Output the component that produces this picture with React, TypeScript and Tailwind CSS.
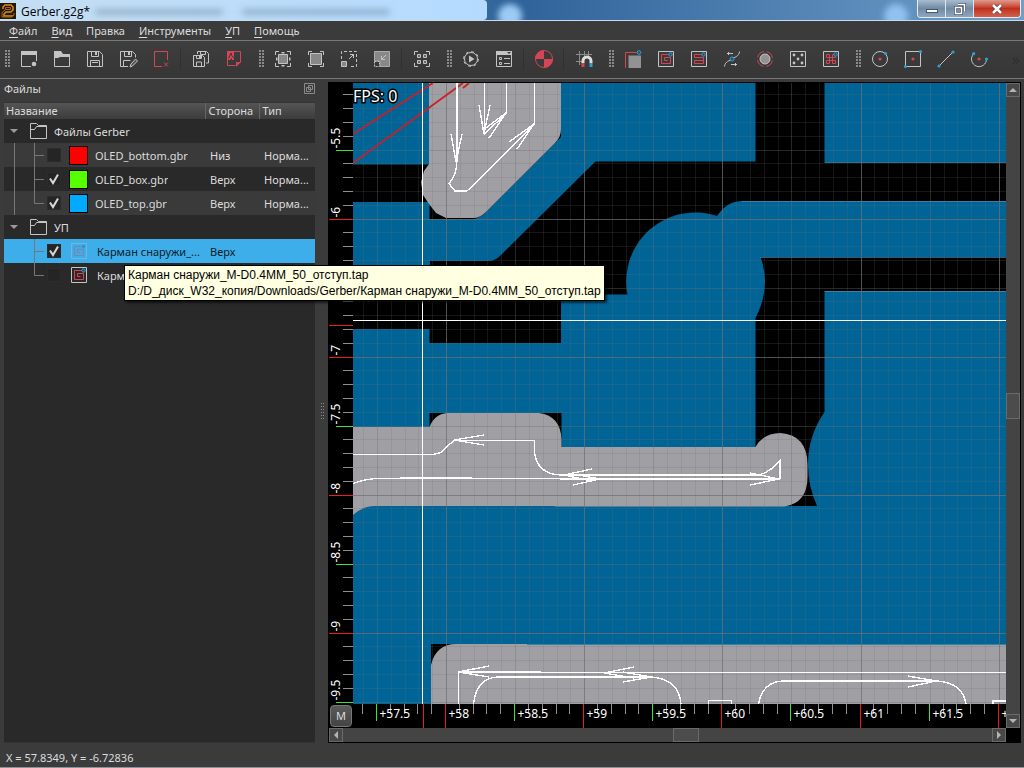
import React, { useState } from 'react';

type Layer = {
  id: string;
  name: string;
  side: string;
  type: string;
  checked: boolean;
  color?: string;
  selected?: boolean;
};

const gerberFiles: Layer[] = [
  { id: 'bottom', name: 'OLED_bottom.gbr', side: 'Низ', type: 'Норма...', checked: false, color: '#ff0000' },
  { id: 'box', name: 'OLED_box.gbr', side: 'Верх', type: 'Норма...', checked: true, color: '#55ff00' },
  { id: 'top', name: 'OLED_top.gbr', side: 'Верх', type: 'Норма...', checked: true, color: '#00aaff' },
];

const toolpaths: Layer[] = [
  { id: 'pocket1', name: 'Карман снаружи_...', side: 'Верх', type: '', checked: true, selected: true },
  { id: 'pocket2', name: 'Карм', side: '', type: '', checked: false },
];

const menus = ['Файл', 'Вид', 'Правка', 'Инструменты', 'УП', 'Помощь'];

const LIGHT = '#c4c4c4';
const RED = '#d64553';
const BLUE = '#2f9fd8';

const PocketIcon = () => (
  <>
    <path d="M.5.5h15v15H.5z" stroke={LIGHT} />
    <path d="M12.5 3.5h-9v9h9v-6h-6v3h3" stroke={RED} />
    <circle cx="12.5" cy="3.5" r="1.7" stroke={BLUE} fill="#24506b" />
  </>
);

const icons: Record<string, React.ReactNode> = {
  'Новый': (
    <>
      <path d="M0 0h16v4H0z" fill={LIGHT} />
      <path d="M.5 3v12.5H10M15.5 3v7" stroke={LIGHT} />
      <circle cx="13" cy="13" r="2.3" fill={LIGHT} />
    </>
  ),
  'Открыть': (
    <>
      <path d="M.5 1v14.5h15V4" stroke={LIGHT} />
      <path d="M0 0h7l2 3h7v3H6L4 7H0z" fill={LIGHT} />
    </>
  ),
  'Сохранить': (
    <>
      <path d="M.5.5h12l3 3v12H.5zM4.5.5v5h7v-5M3.5 15V9.5h9V15M5 11.5h6" stroke={LIGHT} />
      <path d="M8 1h2v3H8z" fill={LIGHT} />
    </>
  ),
  'Сохранить как': (
    <>
      <path d="M8 15.5H.5V.5h12l3 3v3M4.5.5v5h7v-5M3.5 15V9.5h7" stroke={LIGHT} />
      <path d="M10 16l1-3 4.5-5 2 2-5 5z" stroke={LIGHT} fill="#555" />
      <path d="M8 1h2v3H8z" fill={LIGHT} />
    </>
  ),
  'Закрыть': <path d="M14.5 9V.5h-13v15H9M11 11.5l4 4M15 11.5l-4 4" stroke={RED} />,
  'Сохранить все': (
    <>
      <path d="M4.5 3V.5h9l2 2V12H13M7.5.5v3h5v-3" stroke={LIGHT} />
      <path d="M.5 4.5h9l2 2v9H.5zM3.5 4.5v3h5v-3M3.5 15v-4h5v4" stroke={LIGHT} />
      <path d="M6 5h2v2H6z" fill={LIGHT} />
    </>
  ),
  'PDF': (
    <>
      <path d="M1.5 8.5v6h8M8 .5h6.500v11" stroke={RED} />
      <path d="M1 0h7v9H6V7L4 9H1z" fill={RED} />
      <path d="M2.5 7.5L5 2l1 3 2 2" stroke="#3a3a3a" />
      <path d="M10 16v-5h5z" fill={RED} />
    </>
  ),
  'Показать все': (
    <>
      <path d="M3.5 3.5h9v9h-9z" fill="#888" stroke={LIGHT} />
      <path d="M.5 4V.5H4M12 .5h3.5V4M.5 12v3.5H4M12 15.5h3.5V12" stroke={LIGHT} />
      <path d="M6.5 1h3v1.5h-3zM6.5 14h3v1.5h-3zM1 6.5h1.5v3H1zM14 6.5h1.5v3H14z" fill={LIGHT} />
    </>
  ),
  'По размеру': (
    <>
      <path d="M2.5 2.5h11v11h-11z" fill="#888" stroke={LIGHT} />
      <path d="M.5 4V.5H4M12 .5h3.5V4M.5 12v3.5H4M12 15.5h3.5V12" stroke={LIGHT} />
    </>
  ),
  'Увеличить': (
    <>
      <path d="M.5 10.5h5v5h-5z" fill="#888" stroke={LIGHT} />
      <path d="M.5 8V.5h15v15H8" stroke={LIGHT} strokeDasharray="3 2" />
      <path d="M8 8l5-5M9 3.5h3.5V7" stroke={LIGHT} />
    </>
  ),
  'Уменьшить': (
    <>
      <path d="M.5.5h15v15H6V10H.5z" fill="#888" stroke="#aaa" />
      <path d="M12 4L8 8M7.5 5v3.5H11" stroke={LIGHT} />
      <path d="M.5 10.5h5v5h-5z" stroke={LIGHT} strokeDasharray="2 1" fill="#3a3a3a" />
    </>
  ),
  'Выделить': (
    <>
      <path d="M.5 4V.5H4M12 .5h3.5V4M.5 12v3.5H4M12 15.5h3.5V12" stroke={LIGHT} />
      <path d="M3.5 3.5h3v3h-3zM9.5 3.5h3v3h-3zM3.5 9.5h3v3h-3zM9.5 9.5h3v3h-3z" stroke={LIGHT} fill="#666" />
    </>
  ),
  'Запуск': (
    <>
      <circle cx="8" cy="8" r="6.5" stroke={LIGHT} />
      <circle cx="8" cy="8" r="7.4" stroke={LIGHT} strokeDasharray="3 2.8" />
      <path d="M6 4.500L11.5 8 6 11.5z" fill={LIGHT} />
    </>
  ),
  'Свойства': (
    <>
      <path d="M0 0h16v4H0z" fill={LIGHT} />
      <path d="M.5 3v12.5h15V3M3.5 6.5h2v2h-2zM3.5 11.5h2v2h-2zM8 7.5h6M8 12.5h6" stroke={LIGHT} />
      <path d="M11 1h4l-2 2z" fill="#3a3a3a" />
    </>
  ),
  'Центр': (
    <>
      <circle cx="8" cy="8" r="8.5" stroke={RED} fill="#3a3a3a" />
      <path d="M8 8V-1A9 9 0 0 0-1 8zM8 8v9a9 9 0 0 0 9-9z" fill={RED} />
    </>
  ),
  'Привязка': (
    <>
      <path d="M0 3.5h16M0 10.5h6M3.5 0v14M8.5 0v6M12.5 0v5" stroke="#8c8c8c" />
      <path d="M7 12v-2a4 4 0 0 1 8 0v2" stroke="#ddd" strokeWidth="3" />
      <path d="M5.5 12h3v4h-3z" fill={RED} />
      <path d="M13.5 12h3v4h-3z" fill={BLUE} />
    </>
  ),
  'Профиль': (
    <>
      <path d="M4 5h12v12H4z" fill="#929292" />
      <path d="M.5 17V1.5h12" stroke={RED} />
      <path d="M3.5 17V4.5H16" stroke="#666" />
      <circle cx="14" cy="1.5" r="1.8" stroke={BLUE} fill="#24506b" />
    </>
  ),
  'Карман': <PocketIcon />,
  'Карман растром': (
    <>
      <path d="M.5.5h15v15H.5z" stroke={LIGHT} />
      <path d="M12.5 3.5h-9v3h9v3h-9v3h9v-3" stroke={RED} />
      <circle cx="12.5" cy="3.5" r="1.7" stroke={BLUE} fill="#24506b" />
    </>
  ),
  'Переход': (
    <>
      <path d="M.5 15.5C1 10 6 10 8 8s7-2 7.5-7.5M3 2.5h6M4.5 1v3M7 13.5h6M11.5 12v3" stroke={LIGHT} />
      <circle cx="8" cy="8" r="2" stroke={BLUE} fill="#24506b" />
    </>
  ),
  'Термобарьер': (
    <>
      <circle cx="8" cy="8" r="5" fill="#929292" stroke={LIGHT} />
      <circle cx="8" cy="8" r="7.5" stroke={RED} strokeDasharray="8.8 3" strokeDashoffset="-1.5" />
    </>
  ),
  'Сверление': (
    <>
      <path d="M.5.5h15v15H.5z" stroke={LIGHT} />
      {[[4, 4], [12, 4], [8, 8], [4, 12], [12, 12]].map(([x, y]) => (
        <circle key={`${x}-${y}`} cx={x} cy={y} r="1.4" fill={LIGHT} />
      ))}
    </>
  ),
  'Кроссхатч': (
    <>
      <path d="M.5.5h15v15H.5z" stroke={LIGHT} />
      <path d="M3.5 3.5h3v9h-3v-3h9v3h-3v-9h3v3h-9z" stroke={RED} />
      <circle cx="12.5" cy="3.5" r="1.7" stroke={BLUE} fill="#24506b" />
    </>
  ),
  'Окружность': (
    <>
      <circle cx="8" cy="8" r="7.5" stroke={LIGHT} />
      <circle cx="8" cy="8" r="1.6" fill={RED} />
      <circle cx="13.5" cy="2.5" r="1.6" fill={BLUE} />
    </>
  ),
  'Прямоугольник': (
    <>
      <path d="M.5.5h15v15H.5z" stroke={LIGHT} />
      <circle cx="8" cy="8" r="1.6" fill={RED} />
      <circle cx="15.5" cy=".5" r="1.6" fill={BLUE} />
      <circle cx=".5" cy="15.5" r="1.6" fill={BLUE} />
    </>
  ),
  'Линия': (
    <>
      <path d="M1 15L15 1" stroke={LIGHT} />
      <circle cx="15" cy="1" r="1.6" fill={BLUE} />
      <circle cx="1" cy="15" r="1.6" fill={BLUE} />
    </>
  ),
  'Дуга': (
    <>
      <path d="M2.5 3A7.5 7.5 0 1 0 15.5 8" stroke={LIGHT} />
      <circle cx="8" cy="8" r="1.6" fill={RED} />
      <circle cx="2.7" cy="2.7" r="1.6" fill={BLUE} />
      <circle cx="15.5" cy="8" r="1.6" fill={BLUE} />
    </>
  ),
};

// '#' is a drag handle, '|' is a separator
const toolbar = [
  'Новый', 'Открыть', 'Сохранить', 'Сохранить как', 'Закрыть', '|', 'Сохранить все', 'PDF', '#',
  'Показать все', 'По размеру', 'Увеличить', 'Уменьшить', '|', 'Выделить', '#',
  'Запуск', 'Свойства', '|', 'Центр', '|', 'Привязка', '#',
  'Профиль', 'Карман', 'Карман растром', 'Переход', 'Термобарьер', 'Сверление', 'Кроссхатч', '#',
  'Окружность', 'Прямоугольник', 'Линия', 'Дуга',
];

const Handle = () => (
  <svg width="5" height="18" stroke="#8a8a8a" strokeWidth="2" strokeDasharray="2 1" className="shrink-0">
    <path d="M1 0v18M4 0v18" />
  </svg>
);

const TitleBar = () => (
  <header className="relative flex h-[21px] shrink-0 overflow-hidden border-b border-[#c5dcf0] bg-linear-to-r from-[#bfe0fb] via-[#2f6299] via-50% to-[#6f9fc9]">
    <div className="absolute inset-y-0 left-0 w-[487px] rounded-r bg-linear-to-r from-[#c4def3] to-[#b4dbff]" />
    <div className="absolute left-[95px] top-[9px] h-1.5 w-32 rounded bg-[#55738f]/40 blur-[3px]" />
    <div className="absolute left-[242px] top-[9px] h-1.5 w-[148px] rounded bg-[#55738f]/40 blur-[3px]" />
    <div className="absolute left-[498px] top-1 h-6 w-6 rounded-full bg-[#9ccbf5] blur-[3px]" />
    <div className="absolute right-[116px] top-1 h-6 w-6 rounded-full bg-[#8fc2ef] blur-[3px]" />
    <svg width="16" height="16" viewBox="0 0 16 16" className="relative mt-[3px] shrink-0" fill="none">
      <path d="M0 0h16v16H0z" fill="#241808" />
      <path d="M3 6V4l2-2h6l2 2v3l-2 2H6l-2 2v2h9" stroke="#d98a1c" strokeWidth="1.5" />
      <path d="M5.5 6.5v-2h5v2h-5L2 9.5V14h10l2-2v-2" stroke="#a56410" />
    </svg>
    <h1 className="relative pl-[5px] font-['Open_Sans','Noto_Sans',sans-serif] text-xs leading-6 text-black">Gerber.g2g*</h1>
    <div className="relative ml-auto mr-[3px] flex h-[18px] overflow-hidden rounded-b border border-t-0 border-[#e4edf5]">
      <button aria-label="Свернуть" className="flex w-7 items-end justify-center border-r border-[#dce6ef] bg-linear-to-b from-[#a9bccf] via-[#7289a3] via-50% to-[#8fa7be] pb-1">
        <span className="h-1 w-3 border border-[#4a5a6c] bg-white" />
      </button>
      <button aria-label="Развернуть" className="flex w-7 items-center justify-center border-r border-[#dce6ef] bg-linear-to-b from-[#a9bccf] via-[#7289a3] via-50% to-[#8fa7be]">
        <svg width="12" height="12" viewBox="0 0 12 12" fill="none">
          <path d="M4 1.5h6.5v7M1.5 4.5h6v6h-6z" stroke="#46566a" strokeWidth="3" />
          <path d="M4 1.5h6.5v7M1.5 4.5h6v6h-6z" stroke="#fff" strokeWidth="1.5" />
        </svg>
      </button>
      <button aria-label="Закрыть окно" className="flex w-[46px] items-center justify-center bg-linear-to-b from-[#dd9a8c] via-[#c02f1c] via-50% to-[#d0624c]">
        <svg width="12" height="10" viewBox="0 0 12 10" fill="none">
          <path d="M2 1l8 8M10 1L2 9" stroke="#5a3a3a" strokeWidth="4" />
          <path d="M2 1l8 8M10 1L2 9" stroke="#fff" strokeWidth="2.5" />
        </svg>
      </button>
    </div>
  </header>
);

const Folder = () => (
  <svg width="17" height="16" viewBox="0 0 17 16" fill="none" stroke="#c4c4c4" className="shrink-0">
    <path d="M.5.5h6l2 2h8v13H.5zM.5 6.5h4l2-3h10" />
  </svg>
);

const GroupRow: React.FC<{ title: string }> = ({ title }) => (
  <tr className="h-6">
    <td colSpan={3} className="p-0">
      <div className="flex items-center pl-1.5">
        <button aria-label={title} className="mr-3 flex h-2 w-2 items-center">
          <svg width="8" height="5" fill="#9a9a9a">
            <path d="M0 0h8L4 4z" />
          </svg>
        </button>
        <Folder />
        <span className="pl-[7px] pt-0.5">{title}</span>
      </div>
    </td>
  </tr>
);

const LayerRow: React.FC<{ layer: Layer; last: boolean; trunk: boolean; striped: boolean }> = ({ layer, last, trunk, striped }) => {
  const [checked, setChecked] = useState(layer.checked);
  const bg = layer.selected ? 'bg-[#3daee9] text-[#0c1c28]' : striped ? 'bg-[#3a3a3a]' : '';

  return (
    <tr className={`h-6 ${bg}`}>
      <td className="p-0">
        <div className="flex h-6 items-center">
          <svg width="43" height="24" stroke="#777" fill="none" className="shrink-0">
            {trunk && <path d="M10.5 0v24" />}
            <path d={last ? 'M30.5 0v12.5H40' : 'M30.5 0v24M30.5 12.5H40'} />
          </svg>
          <span className="relative h-3.5 w-3.5 shrink-0">
            <input
              id={layer.id}
              type="checkbox"
              checked={checked}
              onChange={(e) => setChecked(e.target.checked)}
              className="block h-3.5 w-3.5 appearance-none border border-[#2c2c2c] bg-[#252525]"
            />
            {checked && (
              <svg width="14" height="14" fill="none" stroke="#d8d8d8" strokeWidth="2" className="pointer-events-none absolute inset-0">
                <path d="M3 6.5L6 11l5-8.5" />
              </svg>
            )}
          </span>
          {layer.color ? (
            <svg width="19" height="19" className="ml-2 shrink-0">
              <path d="M.5.5h18v18H.5z" fill={layer.color} stroke="#000" />
            </svg>
          ) : (
            <svg width="16" height="16" fill="none" className={`ml-2.5 mr-0.5 shrink-0 ${layer.selected ? 'opacity-40' : ''}`}>
              <PocketIcon />
            </svg>
          )}
          <label htmlFor={layer.id} className={`truncate pt-0.5 ${layer.color ? 'pl-[7px]' : 'pl-2'}`}>{layer.name}</label>
        </div>
      </td>
      <td className="p-0 pl-[5px] pt-0.5">{layer.side}</td>
      <td className="p-0 pl-[5px] pt-0.5">{layer.type}</td>
    </tr>
  );
};

const FilesPanel = () => (
  <aside className="flex w-[316px] shrink-0 flex-col pl-1 pr-px">
    <div className="flex h-[23px] items-center justify-between">
      <h2 className="pb-1">Файлы</h2>
      <button aria-label="Открепить" className="pb-1">
        <svg width="11" height="11" fill="none" stroke="#8a8a8a">
          <path d="M.5.5h10v10H.5zM4.5 2.5h4v4h-4zM2.5 4.5h4v4h-4z" />
        </svg>
      </button>
    </div>
    <div className="flex-1 border-y border-[#333] bg-[#292929]">
      <table className="w-full table-fixed border-collapse">
        <colgroup>
          <col />
          <col className="w-[54px]" />
          <col className="w-14" />
        </colgroup>
        <thead>
          <tr className="h-4 bg-linear-to-b from-[#555] to-[#3c3c3c] text-left leading-4">
            <th className="border-r border-[#666] p-0 pl-0.5 font-normal">Название</th>
            <th className="border-r border-[#666] p-0 pl-[3px] font-normal">Сторона</th>
            <th className="p-0 pl-[3px] font-normal">Тип</th>
          </tr>
        </thead>
        <tbody>
          <GroupRow title="Файлы Gerber" />
          {gerberFiles.map((layer, i) => (
            <LayerRow key={layer.id} layer={layer} trunk striped={i % 2 === 0} last={i === gerberFiles.length - 1} />
          ))}
          <GroupRow title="УП" />
          {toolpaths.map((layer, i) => (
            <LayerRow key={layer.id} layer={layer} trunk={false} striped={false} last={i === toolpaths.length - 1} />
          ))}
        </tbody>
      </table>
    </div>
  </aside>
);

// board space: one unit is UNIT pixels, x = 58 sits at X58 and y = -6 at Y6
const UNIT = 138.2;
const X58 = 93;
const Y6 = 135.5;

const steps = (from: number, to: number) => Array.from({ length: to - from + 1 }, (_, i) => from + i);
const gridX = (n: number) => Math.round(X58 + (n * UNIT) / 10) + 0.5;
const gridY = (n: number) => Math.round(Y6 + (n * 138) / 10) + 0.5;

const tickColor = (n: number) => (n % 10 === 0 ? '#f01c1c' : n % 5 === 0 ? '#3fe03f' : '#8f8f8f');
const tickLength = (n: number) => (n % 10 === 0 ? 24 : n % 5 === 0 ? 17 : 10);
const gridOpacity = (n: number) => (n % 10 === 0 ? 0.72 : n % 5 === 0 ? 0.36 : 0.2);

const arrows = [
  'M451 134l5 28 6-28', 'M479 105l5 29 6-29', 'M483 130l23-17-17 25', 'M509 142l25-18-17 25',
  'M484 435l-30 5 30 5', 'M592 469l-28 6 28 6', 'M573 474l27 5-27 6', 'M750 473l29 6-29 6',
  'M489 666l-31 6 31 5', 'M634 667l-30 6 30 5', 'M623 672l28 5-28 5', 'M908 676l28 5-28 6',
];

const Board = () => (
  <svg className="block h-full w-full bg-black" fill="none">
    <g transform="translate(-353 -83)">
      <g fill="#006496">
        <path d="M353 83h76.5v81.5H353z" />
        <path d="M353 202h76.5v17H475l8-4 78-78V83h194.5v78.5h-160L501 255q-6 6-12 6h-59v30h-77z" />
        <path d="M824.5 83H2000v79.5H824.5z" />
        <path d="M353 329h76.5v14H561v-48.5h66.5A69 69 0 0 1 717 216q10-15 25-15H2000v56H760.5q11 30-5 61V506H817q-9-20-9-42 0-28 16.5-52V291H2000v2000H353z" />
      </g>
      <path d="M429.5 413h132v34h-132zM431 644h30v30h-30z" fill="#000" />
      <g fill="#a09fa3">
        <path d="M429 83v81l-5 7-3 11 2 13 6 9 7 9 10 5h27q7 0 13-6l69-69q6-6 6-14V83z" />
        <path d="M353 427h76.5q5-13 17.5-14h92q22 3 22.5 27v7h194q8-14 25-14 27 2 27 32v12q0 26-23 29.500H557l-4-.5H375q-12 0-22 9z" />
        <path d="M431 704v-39q5-21 25-21h71v1H2000v2000H431z" />
      </g>
      <path d="M824.5 162.5H2000M824.5 291.5H2000M742 201.5H2000M760 257.5H2000M527 644.5H2000" stroke="#5c93b4" strokeOpacity=".6" />
    </g>
    <g stroke="#707070" shapeRendering="crispEdges">
      {steps(-6, 140).map((n) => (
        <line key={`x${n}`} x1={gridX(n)} x2={gridX(n)} y1="0" y2="2000" strokeOpacity={gridOpacity(n)} />
      ))}
      {steps(-9, 140).map((n) => (
        <line key={`y${n}`} y1={gridY(n)} y2={gridY(n)} x1="0" x2="2000" strokeOpacity={gridOpacity(n)} />
      ))}
    </g>
    <g transform="translate(-353 -83)" stroke="#cc1f24" strokeWidth="1.8">
      <path d="M353 134l80-51M353 163l110-80M463 88l6-5" />
    </g>
    <g transform="translate(-353 -83)" stroke="#fff" strokeWidth="1.4" shapeRendering="crispEdges">
      <path d="M457 83v76" strokeWidth="2" />
      <path d="M457 159q0 16-8 24.500l6 7.500h12l67.500-66.500V83M484.5 83v51l22-21V83" />
      <path d="M353 454.5h77q12 0 16-7l8-7h80.500V453q3 21 26 22" />
      <path d="M560 475h200M560 479h220" strokeWidth="2" />
      <path d="M755 475.5q13-1 25-15V479M780 479l-237-.5H380q-14 0-27 5" />
      <path d="M400 478h72" strokeWidth="2" />
      <path d="M458.5 704v-32H541M541 672.5H2000" />
      <path d="M497 677h154M782 681h155" strokeWidth="2" />
      <path d="M473.5 704q3-26 24-27M651 677q28 2 30 27M758.5 704q4-22 24-23M937 681q26 2 29 23M708.5 704v-3.500h23v3.500M993 704v-3h13" />
      {arrows.map((d) => (
        <path key={d} d={d} />
      ))}
    </g>
    <g transform="translate(-353 -83)" stroke="#fff" shapeRendering="crispEdges">
      <path d="M422.5 83v2000M353 320.5H2000" />
    </g>
    <text x="0" y="19" fontSize="16" fill="#fff" stroke="#000" strokeWidth="3" paintOrder="stroke">FPS: 0</text>
  </svg>
);

const VerticalRuler = () => (
  <svg className="block h-full w-full bg-black" fill="#fff" fontSize="12">
    {steps(-9, 140).map((n) => (
      <line key={n} x1={24 - tickLength(n)} x2="24" y1={gridY(n)} y2={gridY(n)} stroke={tickColor(n)} />
    ))}
    <path d="M0 242.5h24" stroke="#f01c1c" />
    {steps(-1, 7).map((n) => (
      <text key={n} transform={`translate(11 ${gridY(n * 5) - 2}) rotate(-90)`}>{-6 - n / 2}</text>
    ))}
  </svg>
);

const HorizontalRuler = () => (
  <svg className="block h-full w-full bg-black" fill="#fff" fontSize="12">
    {steps(-6, 140).map((n) => (
      <line key={n} y1="0" y2={tickLength(n)} x1={gridX(n) - 1} x2={gridX(n) - 1} stroke={tickColor(n)} />
    ))}
    <path d="M70.5 0v24" stroke="#f01c1c" />
    {steps(-1, 8).map((n) => (
      <text key={n} x={gridX(n * 5) + 2} y="14">{`+${58 + n / 2}`}</text>
    ))}
  </svg>
);

const ScrollButton: React.FC<{ label: string; d: string }> = ({ label, d }) => (
  <button aria-label={label} className="flex h-3.5 w-3.5 shrink-0 items-center justify-center border border-[#6a6a6a] bg-[#484848]">
    <svg width="8" height="8" fill="#b4b4b4">
      <path d={d} />
    </svg>
  </button>
);

const Viewer = () => (
  <main className="mr-[3px] mt-[3px] grid min-w-0 flex-1 grid-cols-[24px_minmax(0,1fr)_14px] grid-rows-[minmax(0,1fr)_24px_14px] border border-black bg-black">
    <VerticalRuler />
    <Board />
    <div className="row-span-2 flex flex-col bg-[#444]">
      <ScrollButton label="Вверх" d="M0 6h8L4 2z" />
      <div className="flex-1" />
      <div className="h-[26px] border border-[#6a6a6a] bg-[#4c4c4c]" />
      <div className="flex-1" />
      <ScrollButton label="Вниз" d="M0 2h8L4 6z" />
    </div>
    <button className="m-px rounded-sm border border-[#777] bg-linear-to-b from-[#5a5a5a] to-[#444] text-[11px] leading-5">M</button>
    <HorizontalRuler />
    <div className="col-span-2 flex bg-[#444]">
      <ScrollButton label="Влево" d="M6 0v8L2 4z" />
      <div className="flex-[331]" />
      <div className="w-[26px] border border-[#6a6a6a] bg-[#4c4c4c]" />
      <div className="flex-[293]" />
      <ScrollButton label="Вправо" d="M2 0v8l4-4z" />
    </div>
    <div className="bg-black" />
  </main>
);

const App: React.FC = () => {
  return (
    <div className="relative flex h-screen flex-col overflow-hidden border-b border-[#8b9299] bg-[#3b3b3b] font-['Noto_Sans','Liberation_Sans',sans-serif] text-[11px] leading-4 text-[#dcdcdc]">
      <TitleBar />
      <nav className="flex h-5 shrink-0 items-center border-b border-[#777] pl-0.5">
        {menus.map((m) => (
          <button key={m} className="px-[7px]">
            {m === 'Правка' ? m : <><u className="underline-offset-2">{m[0]}</u>{m.slice(1)}</>}
          </button>
        ))}
      </nav>
      <div role="toolbar" className="flex h-[38px] shrink-0 items-center border-b border-[#777] bg-linear-to-b from-[#3e3e3e] to-[#363636] pb-0.5">
        <div className="flex w-3 justify-end pr-0.5">
          <Handle />
        </div>
        {toolbar.map((item, i) => {
          if (item === '#') return <div key={i} className="flex w-4 shrink-0 justify-end pr-0.5"><Handle /></div>;
          if (item === '|') return <div key={i} className="mx-[3px] h-5 w-px shrink-0 bg-[#303030]" />;
          return (
            <button key={i} aria-label={item} className="flex w-[33px] shrink-0 justify-center">
              <svg width="16" height="16" fill="none" overflow="visible">
                {icons[item]}
              </svg>
            </button>
          );
        })}
        <span className="ml-auto pr-1 text-base text-[#2e2e2e]">»</span>
      </div>
      <div className="flex min-h-0 flex-1">
        <FilesPanel />
        <div className="flex w-3 shrink-0 items-center justify-center">
          <svg width="5" height="17" stroke="#8a8a8a" strokeDasharray="1 2">
            <path d="M1.5 0v17M3.5 0v17" />
          </svg>
        </div>
        <Viewer />
      </div>
      <footer className="h-6 shrink-0 pl-1.5 pt-[7px]">X = 57.8349, Y = -6.72836</footer>
      <div role="tooltip" className="absolute left-[124px] top-[265px] border border-black bg-[#ffffe1] px-[3px] py-px font-['Liberation_Sans',sans-serif] text-xs leading-4 text-black shadow-[2px_2px_2px_rgba(0,0,0,0.6)]">
        <p>Карман снаружи_M-D0.4MM_50_отступ.tap</p>
        <p>D:/D_диск_W32_копия/Downloads/Gerber/Карман снаружи_M-D0.4MM_50_отступ.tap</p>
      </div>
    </div>
  );
};

export default App;
